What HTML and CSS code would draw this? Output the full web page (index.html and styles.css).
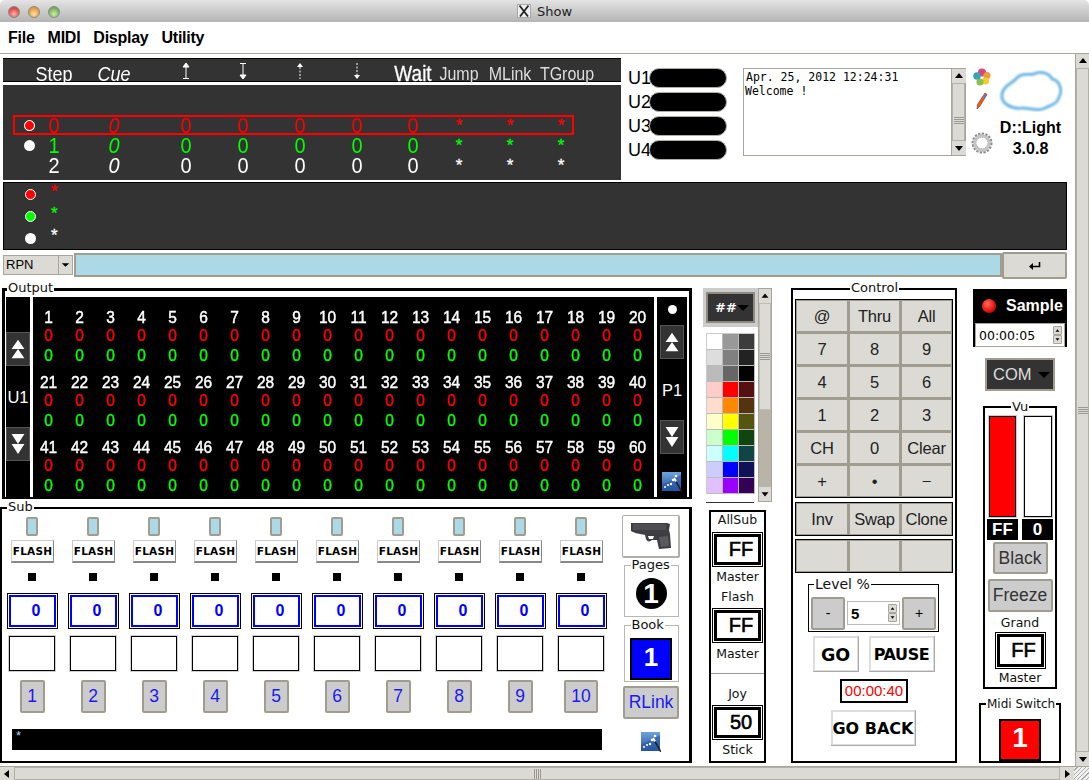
FILE: index.html
```html
<!DOCTYPE html>
<html lang="en">
<head>
<meta charset="utf-8">
<title>Show</title>
<link rel="stylesheet" href="styles.css">
</head>
<body>
<svg class="defs" width="0" height="0" aria-hidden="true">
  <defs>
    <linearGradient id="wandbg" x1="0" y1="0" x2="0" y2="1"><stop offset="0" stop-color="#6fa3dc"/><stop offset="1" stop-color="#1f4f9a"/></linearGradient>
    <filter id="soft"><feGaussianBlur stdDeviation="1"/></filter>
    <symbol id="wand" viewBox="0 0 20 20">
      <rect width="19" height="19" fill="url(#wandbg)"/>
      <path d="M0 13 L19 3 V19 H0Z" fill="#2a5aa8" opacity=".6"/>
      <path d="M12 6 L20 20" stroke="#222" stroke-width="1.6"/>
      <path d="M12 6 L14 9.5" stroke="#fff" stroke-width="2"/>
      <circle cx="3" cy="15" r="1" fill="#fff"/><circle cx="6" cy="13" r="1.1" fill="#fff"/><circle cx="9" cy="12" r="1.2" fill="#fff"/><circle cx="11" cy="8" r="1.3" fill="#fff"/><circle cx="14" cy="4" r="1.3" fill="#fff"/>
    </symbol>
    <symbol id="dbl-up" viewBox="0 0 24 34"><path d="M12 7 L19 17 H5Z M12 17 L19 27 H5Z" fill="#fff"/></symbol>
    <symbol id="dbl-down" viewBox="0 0 24 34"><path d="M5 6 H19 L12 17Z M5 17 H19 L12 28Z" fill="#fff"/></symbol>
    <symbol id="sb-up" viewBox="0 0 14 14"><path d="M3 9 H11 L7 4Z" fill="#000"/></symbol>
    <symbol id="sb-down" viewBox="0 0 14 14"><path d="M3 5 H11 L7 10Z" fill="#000"/></symbol>
    <symbol id="sb-left" viewBox="0 0 14 14"><path d="M9 3 V11 L4 7Z" fill="#000"/></symbol>
    <symbol id="sb-right" viewBox="0 0 14 14"><path d="M5 3 V11 L10 7Z" fill="#000"/></symbol>
    <symbol id="spin" viewBox="0 0 9 9"><path d="M2 6 H7 L4.5 3Z" fill="#000"/></symbol>
    <symbol id="spin-d" viewBox="0 0 9 9"><path d="M2 3 H7 L4.5 6Z" fill="#000"/></symbol>
  </defs>
</svg>

<div class="app">
  <header class="titlebar">
    <div class="lights"><i class="light red"></i><i class="light amber"></i><i class="light green"></i></div>
    <div class="title">
      <svg class="x-icon" width="14" height="14" viewBox="0 0 14 14"><rect x=".5" y=".5" width="13" height="13" fill="#eee" stroke="#aaa"/><path d="M2.5 1.5 L11 12.5 M11.5 1.5 L3 12.5" stroke="#222" stroke-width="1.8"/></svg>
      <span>Show</span>
    </div>
  </header>
  <nav class="menubar"><span>File</span><span>MIDI</span><span>Display</span><span>Utility</span></nav>

  <div class="body">
    <main class="canvas">
      <section class="top">
        <div class="cues">
          <div class="cue-head cols">
            <span></span><b>Step</b><em>Cue</em>
            <span><svg width="10" height="18" viewBox="0 0 10 18"><path d="M5 2 V16 M2 16.5 H8 M5 1 L2 5 H8Z" stroke="#fff" stroke-width="1" fill="#fff"/></svg></span>
            <span><svg width="10" height="18" viewBox="0 0 10 18"><path d="M5 2 V16 M2 1.5 H8 M5 17 L2 13 H8Z" stroke="#fff" stroke-width="1" fill="#fff"/></svg></span>
            <span><svg width="10" height="18" viewBox="0 0 10 18"><path d="M5 5 V17" stroke="#fff" stroke-dasharray="2 1.5"/><path d="M5 1 L2 5 H8Z" fill="#fff"/></svg></span>
            <span><svg width="10" height="18" viewBox="0 0 10 18"><path d="M5 1 V13" stroke="#fff" stroke-dasharray="2 1.5"/><path d="M5 17 L2 13 H8Z" fill="#fff"/></svg></span>
            <b class="wait">Wait</b><small>Jump</small><small>MLink</small><small class="tgroup">TGroup</small>
          </div>
          <div class="cue-list">
            <div class="cue-row cols active c-red"><span><i class="dot c-red-dot"></i></span><span>0</span><em>0</em><span>0</span><span>0</span><span>0</span><span>0</span><span>0</span><span class="star">*</span><span class="star">*</span><span class="star">*</span></div>
            <div class="cue-row cols c-green"><span><i class="dot"></i></span><span>1</span><em>0</em><span>0</span><span>0</span><span>0</span><span>0</span><span>0</span><span class="star">*</span><span class="star">*</span><span class="star">*</span></div>
            <div class="cue-row cols c-white"><span></span><span>2</span><em>0</em><span>0</span><span>0</span><span>0</span><span>0</span><span>0</span><span class="star">*</span><span class="star">*</span><span class="star">*</span></div>
          </div>
        </div>

        <div class="units">
          <div class="unit"><span>U1</span><i></i></div>
          <div class="unit"><span>U2</span><i></i></div>
          <div class="unit"><span>U3</span><i></i></div>
          <div class="unit"><span>U4</span><i></i></div>
        </div>

        <div class="log">
          <div class="log-text"><span class="log-first">Apr. 25, 2012 12:24:31</span><br>Welcome !</div>
          <div class="log-scroll">
            <svg class="sb-btn" width="14" height="14"><use href="#sb-up"/></svg>
            <div class="log-thumb"><i class="grip"></i></div>
            <svg class="sb-btn" width="14" height="14"><use href="#sb-down"/></svg>
          </div>
        </div>

        <div class="tools">
          <svg width="18" height="18" viewBox="0 0 18 18"><circle cx="9" cy="4.5" r="4" fill="#d8467e"/><circle cx="14" cy="7.5" r="3.6" fill="#f09a3c"/><circle cx="12.5" cy="13" r="3.6" fill="#f2d02c"/><circle cx="7" cy="14" r="3.6" fill="#8cc04c"/><circle cx="4" cy="8" r="3.8" fill="#36a4b4"/></svg>
          <svg class="pencil" width="12" height="18" viewBox="0 0 12 18"><path d="M9 1 L11 2.5 L4 14 L1 17 L1.5 12.5Z" fill="#e8601c" stroke="#7a2a10" stroke-width=".6"/><path d="M8.5 2 L10.5 3.5 L9 6 L7 4.5Z" fill="#5a7ad8"/></svg>
          <svg class="gear" width="22" height="22" viewBox="0 0 22 22"><circle cx="11" cy="11" r="8" fill="none" stroke="#8d8d8d" stroke-width="5" stroke-dasharray="2 1.1"/><circle cx="11" cy="11" r="7.2" fill="none" stroke="#c4c4c4" stroke-width="3"/><ellipse cx="11" cy="11" rx="5.5" ry="4.4" fill="#fff"/></svg>
        </div>

        <div class="brand">
          <svg width="64" height="42" viewBox="0 0 64 42"><path d="M3 25 C4 16 13 14 18 8 C23 2 30 6 35 4 C42 1 50 3 53 9 C62 11 63 22 60 27 C58 35 50 35 46 38 C38 42 30 37 22 38 C12 39 2 33 3 25Z" fill="#fff" stroke="#5fb4e0" stroke-width="3" filter="url(#soft)"/></svg>
          <b>D::Light</b>
          <b>3.0.8</b>
        </div>
      </section>

      <section class="faders">
        <div class="fade-row c-red"><i class="dot c-red-dot"></i><span>*</span></div>
        <div class="fade-row c-green"><i class="dot c-green-dot"></i><span>*</span></div>
        <div class="fade-row c-white"><i class="dot"></i><span>*</span></div>
      </section>

      <section class="cmd">
        <div class="rpn"><span>RPN</span><svg width="14" height="18" viewBox="0 0 14 18"><path d="M3 7 H11 L7 11Z" fill="#000"/></svg></div>
        <div class="cmd-input"></div>
        <div class="enter"><svg width="14" height="10" viewBox="0 0 14 10"><path d="M11.5 1 V5.5 H3" stroke="#000" stroke-width="1.6" fill="none"/><path d="M5 2 V9 L1 5.5Z" fill="#000"/></svg></div>
      </section>

      <section class="bottom">
        <div class="leftcol">
          <div class="output">
            <span class="legend legend-out">Output</span>
            <div class="out-side">
              <svg class="dbl first" width="24" height="34"><use href="#dbl-up"/></svg>
              <div class="out-label">U1</div>
              <svg class="dbl" width="24" height="34"><use href="#dbl-down"/></svg>
            </div>
            <div class="out-grid">
              <div class="out-row num"><span>1</span><span>2</span><span>3</span><span>4</span><span>5</span><span>6</span><span>7</span><span>8</span><span>9</span><span>10</span><span>11</span><span>12</span><span>13</span><span>14</span><span>15</span><span>16</span><span>17</span><span>18</span><span>19</span><span>20</span></div>
              <div class="out-row r"><span>0</span><span>0</span><span>0</span><span>0</span><span>0</span><span>0</span><span>0</span><span>0</span><span>0</span><span>0</span><span>0</span><span>0</span><span>0</span><span>0</span><span>0</span><span>0</span><span>0</span><span>0</span><span>0</span><span>0</span></div>
              <div class="out-row g"><span>0</span><span>0</span><span>0</span><span>0</span><span>0</span><span>0</span><span>0</span><span>0</span><span>0</span><span>0</span><span>0</span><span>0</span><span>0</span><span>0</span><span>0</span><span>0</span><span>0</span><span>0</span><span>0</span><span>0</span></div>
              <div class="out-row num"><span>21</span><span>22</span><span>23</span><span>24</span><span>25</span><span>26</span><span>27</span><span>28</span><span>29</span><span>30</span><span>31</span><span>32</span><span>33</span><span>34</span><span>35</span><span>36</span><span>37</span><span>38</span><span>39</span><span>40</span></div>
              <div class="out-row r"><span>0</span><span>0</span><span>0</span><span>0</span><span>0</span><span>0</span><span>0</span><span>0</span><span>0</span><span>0</span><span>0</span><span>0</span><span>0</span><span>0</span><span>0</span><span>0</span><span>0</span><span>0</span><span>0</span><span>0</span></div>
              <div class="out-row g"><span>0</span><span>0</span><span>0</span><span>0</span><span>0</span><span>0</span><span>0</span><span>0</span><span>0</span><span>0</span><span>0</span><span>0</span><span>0</span><span>0</span><span>0</span><span>0</span><span>0</span><span>0</span><span>0</span><span>0</span></div>
              <div class="out-row num"><span>41</span><span>42</span><span>43</span><span>44</span><span>45</span><span>46</span><span>47</span><span>48</span><span>49</span><span>50</span><span>51</span><span>52</span><span>53</span><span>54</span><span>55</span><span>56</span><span>57</span><span>58</span><span>59</span><span>60</span></div>
              <div class="out-row r"><span>0</span><span>0</span><span>0</span><span>0</span><span>0</span><span>0</span><span>0</span><span>0</span><span>0</span><span>0</span><span>0</span><span>0</span><span>0</span><span>0</span><span>0</span><span>0</span><span>0</span><span>0</span><span>0</span><span>0</span></div>
              <div class="out-row g"><span>0</span><span>0</span><span>0</span><span>0</span><span>0</span><span>0</span><span>0</span><span>0</span><span>0</span><span>0</span><span>0</span><span>0</span><span>0</span><span>0</span><span>0</span><span>0</span><span>0</span><span>0</span><span>0</span><span>0</span></div>
            </div>
            <div class="out-side out-right">
              <i class="page-dot"></i>
              <svg class="dbl second" width="24" height="34"><use href="#dbl-up"/></svg>
              <div class="out-label p1">P1</div>
              <svg class="dbl" width="24" height="34"><use href="#dbl-down"/></svg>
              <svg class="wand-out" width="20" height="20"><use href="#wand"/></svg>
            </div>
          </div>

          <div class="sub">
            <span class="legend legend-sub">Sub</span>
            <div class="sub-main">
              <div class="sub-cols">
                <div class="sub-col"><i class="chk"></i><div class="flash">FLASH</div><i class="sq"></i><div class="blue-box">0</div><div class="empty"></div><div class="numbtn">1</div></div>
                <div class="sub-col"><i class="chk"></i><div class="flash">FLASH</div><i class="sq"></i><div class="blue-box">0</div><div class="empty"></div><div class="numbtn">2</div></div>
                <div class="sub-col"><i class="chk"></i><div class="flash">FLASH</div><i class="sq"></i><div class="blue-box">0</div><div class="empty"></div><div class="numbtn">3</div></div>
                <div class="sub-col"><i class="chk"></i><div class="flash">FLASH</div><i class="sq"></i><div class="blue-box">0</div><div class="empty"></div><div class="numbtn">4</div></div>
                <div class="sub-col"><i class="chk"></i><div class="flash">FLASH</div><i class="sq"></i><div class="blue-box">0</div><div class="empty"></div><div class="numbtn">5</div></div>
                <div class="sub-col"><i class="chk"></i><div class="flash">FLASH</div><i class="sq"></i><div class="blue-box">0</div><div class="empty"></div><div class="numbtn">6</div></div>
                <div class="sub-col"><i class="chk"></i><div class="flash">FLASH</div><i class="sq"></i><div class="blue-box">0</div><div class="empty"></div><div class="numbtn">7</div></div>
                <div class="sub-col"><i class="chk"></i><div class="flash">FLASH</div><i class="sq"></i><div class="blue-box">0</div><div class="empty"></div><div class="numbtn">8</div></div>
                <div class="sub-col"><i class="chk"></i><div class="flash">FLASH</div><i class="sq"></i><div class="blue-box">0</div><div class="empty"></div><div class="numbtn">9</div></div>
                <div class="sub-col"><i class="chk"></i><div class="flash">FLASH</div><i class="sq"></i><div class="blue-box">0</div><div class="empty"></div><div class="numbtn wide">10</div></div>
              </div>
              <div class="sub-bar">*</div>
            </div>
            <div class="sub-side">
              <div class="gun">
                <svg width="42" height="28" viewBox="0 0 42 28"><path d="M1 1 H37 L40 2 L39 8 L40 12 L41 26 L29 27 L27 18 H22 C20 20 17 20 16 17 L15 13 C10 12 4 11 1 9Z" fill="#3e3e42"/><path d="M3 3 H36 M3 5 H36 M3 7 H36" stroke="#6f6f73" stroke-width=".7"/><path d="M29 15 L38 14 L39 24 L31 25Z" fill="#59595e"/><path d="M18 14 H24 L23 17 H19Z" fill="#fff"/></svg>
              </div>
              <div class="pages">
                <span class="legend legend-pages">Pages</span>
                <div class="page-circle">1</div>
              </div>
              <div class="book">
                <span class="legend legend-pages">Book</span>
                <div class="book-square">1</div>
              </div>
              <div class="numbtn rlink">RLink</div>
              <svg class="wand-sub" width="20" height="20"><use href="#wand"/></svg>
            </div>
          </div>
        </div>

        <div class="colorcol">
          <div class="palette">
            <div class="pal-left">
              <div class="pal-select-wrap"><div class="pal-select"><b>##</b><i class="tri"></i></div></div>
              <div class="swatches">
                <i class="s1"></i><i class="s2"></i><i class="s3"></i>
                <i class="s4"></i><i class="s5"></i><i class="s6"></i>
                <i class="s7"></i><i class="s8"></i><i class="s9"></i>
                <i class="s10"></i><i class="s11"></i><i class="s12"></i>
                <i class="s13"></i><i class="s14"></i><i class="s15"></i>
                <i class="s16"></i><i class="s17"></i><i class="s18"></i>
                <i class="s19"></i><i class="s20"></i><i class="s21"></i>
                <i class="s22"></i><i class="s23"></i><i class="s24"></i>
                <i class="s25"></i><i class="s26"></i><i class="s27"></i>
                <i class="s28"></i><i class="s29"></i><i class="s30"></i>
              </div>
              <div class="pal-rule"></div>
            </div>
            <div class="pal-scroll">
              <svg class="sb-btn" width="14" height="14"><use href="#sb-up"/></svg>
              <div class="pal-thumb"><i class="grip"></i></div>
              <div class="pal-trough"></div>
              <svg class="sb-btn" width="14" height="14"><use href="#sb-down"/></svg>
            </div>
          </div>
          <div class="allsub">
            <div class="lbl">AllSub</div>
            <div class="val-box m4">FF</div>
            <div class="lbl m2">Master</div>
            <div class="lbl m4">Flash</div>
            <div class="val-box m3">FF</div>
            <div class="lbl m3">Master</div>
            <div class="as-rule"></div>
            <div class="lbl joy">Joy</div>
            <div class="val-box m3">50</div>
            <div class="lbl m2">Stick</div>
          </div>
        </div>

        <div class="control">
          <span class="legend legend-ctrl">Control</span>
          <div class="keys six">
            <div>@</div><div>Thru</div><div>All</div>
            <div>7</div><div>8</div><div>9</div>
            <div>4</div><div>5</div><div>6</div>
            <div>1</div><div>2</div><div>3</div>
            <div>CH</div><div>0</div><div>Clear</div>
            <div>+</div><div>•</div><div>−</div>
          </div>
          <div class="keys g2"><div>Inv</div><div>Swap</div><div>Clone</div></div>
          <div class="keys g3"><div></div><div></div><div></div></div>
          <div class="level">
            <span class="legend legend-level">Level %</span>
            <div class="lvl-btn">-</div>
            <div class="lvl-spin"><b>5</b><span class="spinner"><svg width="9" height="9"><use href="#spin"/></svg><svg width="9" height="9"><use href="#spin-d"/></svg></span></div>
            <div class="lvl-btn">+</div>
          </div>
          <div class="go-row"><div class="go go-a">GO</div><div class="go go-b">PAUSE</div></div>
          <div class="timer">00:00:40</div>
          <div class="go go-c">GO BACK</div>
        </div>

        <div class="rightcol">
          <div class="sample">
            <div class="sample-top"><i class="led"></i><b>Sample</b></div>
            <div class="sample-input"><span>00:00:05</span><span class="spinner"><svg width="9" height="9"><use href="#spin"/></svg><svg width="9" height="9"><use href="#spin-d"/></svg></span></div>
          </div>
          <div class="com"><span>COM</span><i class="tri"></i></div>
          <div class="vu">
            <span class="legend legend-vu">Vu</span>
            <div class="vu-bars"><div class="bar red"></div><div class="bar white"></div></div>
            <div class="vu-vals"><b>FF</b><b>0</b></div>
            <div class="numbtn gray black-btn">Black</div>
            <div class="numbtn gray freeze">Freeze</div>
            <div class="lbl m2 tall">Grand</div>
            <div class="val-box grand">FF</div>
            <div class="lbl tall">Master</div>
          </div>
          <div class="midi">
            <span class="legend legend-midi">Midi Switch</span>
            <div class="midi-square">1</div>
          </div>
        </div>
      </section>
    </main>

    <aside class="vscroll">
      <svg class="sb-btn" width="14" height="14"><use href="#sb-up"/></svg>
      <div class="v-thumb"><i class="grip"></i></div>
      <svg class="sb-btn" width="14" height="14"><use href="#sb-down"/></svg>
    </aside>
  </div>

  <footer class="hscroll">
    <svg class="sb-btn" width="14" height="14"><use href="#sb-left"/></svg>
    <div class="h-thumb"><i class="grip-h"></i></div>
    <svg class="sb-btn" width="14" height="14"><use href="#sb-right"/></svg>
    <div class="resize"></div>
  </footer>
</div>
</body>
</html>
```
FILE: styles.css
```css
* { box-sizing: border-box; }
html, body { margin: 0; padding: 0; }
body { width: 1089px; height: 780px; overflow: hidden; background: #fff; font-family: "Liberation Sans", Arial, sans-serif; color: #000; }
i, em { display: block; }
.defs { position: absolute; }
.app { width: 1089px; height: 780px; display: flex; flex-direction: column; }

/* window chrome */
.titlebar { height: 22px; flex: none; position: relative; display: flex; align-items: center; justify-content: center; background: linear-gradient(#e4e4e4, #b4b4b4); border-radius: 5px 5px 0 0; }
.lights { position: absolute; left: 8px; top: 6px; display: flex; gap: 8px; }
.light { width: 12px; height: 12px; border-radius: 50%; border: 1px solid #888; }
.light.red { background: radial-gradient(circle at 50% 70%, #ffb0a8, #d8453c 70%); }
.light.amber { background: radial-gradient(circle at 50% 70%, #ffe0a0, #dd9a3a 70%); }
.light.green { background: radial-gradient(circle at 50% 70%, #c8f0a8, #72ac50 70%); }
.title { display: flex; align-items: center; gap: 6px; font: 13px "DejaVu Sans", sans-serif; color: #222; }
.menubar { height: 32px; flex: none; display: flex; align-items: center; gap: 13px; padding-left: 8px; border-bottom: 1px solid #a8a8a0; font-size: 16px; font-weight: bold; background: #fff; }
.menubar span { letter-spacing: -.25px; }
.body { height: 712px; flex: none; display: flex; }
.canvas { width: 1075px; flex: none; background: #fff; }

/* scrollbars */
.sb-btn { display: block; flex: none; background: #dcdad5; }
.grip { display: block; width: 10px; height: 7px; background: repeating-linear-gradient(#9a9890 0 1px, #dcdad5 1px 2px); }
.grip-h { display: block; width: 7px; height: 10px; background: repeating-linear-gradient(90deg, #9a9890 0 1px, #dcdad5 1px 2px); }
.vscroll { width: 14px; flex: none; display: flex; flex-direction: column; background: #dcdad5; border-left: 1px solid #a8a69c; }
.v-thumb { flex: 1; display: flex; align-items: center; justify-content: center; border: 1px solid #b4b2a8; background: #dcdad5; }
.hscroll { height: 14px; flex: none; display: flex; background: #dcdad5; border-top: 1px solid #a8a69c; }
.h-thumb { width: 1046px; display: flex; align-items: center; justify-content: center; border: 1px solid #b4b2a8; }
.resize { width: 15px; background: repeating-linear-gradient(135deg, #f0f0f0 0 2px, #aaa 2px 3px); }

/* top section */
.top { height: 128px; display: flex; }
.cues { width: 618px; margin-left: 3px; flex: none; }
.cols { display: grid; grid-template-columns: 15px 34px 86px 58px 56px 58px 56px 56px 36px 66px 36px; }
.cols > * { display: flex; justify-content: center; align-items: center; white-space: nowrap; }
.cue-head { margin-top: 4px; height: 24px; padding-left: 19px; background: #333; border-top: 1px solid #000; border-bottom: 1px solid #000; color: #fff; font-size: 18px; }
.cue-head b, .cue-head em { font-weight: normal; padding-top: 4px; transform: scaleY(1.12); }
.cue-head b.wait { font-size: 19px; -webkit-text-stroke: .25px #fff; }
.cue-head small { font-size: 16px; color: #ddd; padding-top: 3px; transform: scaleY(1.12); }
.cue-head svg { margin-top: -2px; }
.tgroup { margin-left: 12px; }
.cue-list { margin-top: 3px; height: 95px; padding-top: 30px; background: #333; }
.cue-row { margin-left: 10px; width: 561px; height: 20px; padding-left: 7px; border: 2px solid transparent; font-size: 20px; line-height: 16px; }
.cue-row > span:not(.star), .cue-row > em { transform: scaleY(1.14); }
.cue-row.active { border-color: #f00; }
.star { font-size: 17px; align-items: flex-start; height: 14px; margin-top: 1px; -webkit-text-stroke: .3px currentColor; }
.c-red { color: #f00; }
.c-green { color: #0f0; }
.c-white { color: #fff; }
.dot { width: 11px; height: 11px; border-radius: 50%; background: #fff; flex: none; }
.cue-row .dot { transform: scaleY(.88); }
.dot.c-red-dot { background: #f00; border: 1px solid #fff; }
.dot.c-green-dot { background: #0f0; border: 1px solid #fff; }

.units { margin: 14px 0 0 7px; width: 99px; flex: none; display: flex; flex-direction: column; gap: 4px; }
.unit { display: flex; height: 20px; align-items: center; font-size: 18px; }
.unit span { width: 21px; flex: none; }
.unit i { width: 78px; height: 20px; border-radius: 10px; background: #000; border: 1px solid #b0b0a8; }
.log { margin: 14px 0 0 16px; width: 223px; height: 88px; flex: none; display: flex; border: 1px solid #a8a69c; }
.log-text { flex: 1; font: 11.5px/14px "DejaVu Sans Mono", monospace; padding: 1px 0 0 1px; white-space: nowrap; }
.log-first { padding-left: 1px; }
.log-scroll { width: 14px; flex: none; display: flex; flex-direction: column; background: #dcdad5; border-left: 1px solid #a8a69c; }
.log-thumb { flex: 1; display: flex; align-items: center; justify-content: center; padding-top: 16px; border: 1px solid #b4b2a8; }
.tools { margin: 14px 0 0 4px; width: 24px; flex: none; display: flex; flex-direction: column; align-items: center; }
.pencil { margin-top: 6px; }
.gear { margin-top: 22px; }
.brand { margin: 16px 0 0 1px; width: 71px; flex: none; display: flex; flex-direction: column; align-items: center; font-size: 16px; line-height: 21px; }
.brand svg { flex: none; margin-bottom: 5px; }

.faders { margin-left: 3px; width: 1064px; height: 68px; background: #333; border: 1px solid #000; }
.fade-row { height: 22px; display: flex; align-items: center; padding-left: 21px; font-size: 17px; -webkit-text-stroke: .3px currentColor; }
.fade-row span { margin-left: 15px; height: 16px; line-height: 16px; margin-top: -4px; }

.cmd { margin: 2px 0 0 3px; width: 1064px; height: 27px; display: flex; }
.rpn { margin-top: 3px; width: 70px; height: 20px; flex: none; display: flex; justify-content: space-between; background: #dcdad5; border: 1px solid #a8a69c; font-size: 13px; line-height: 18px; padding-left: 2px; }
.rpn svg { background: #dcdad5; border-left: 1px solid #a8a69c; }
.cmd-input { margin: 1px 0 0 1px; width: 928px; height: 24px; background: #add8e6; border: 2px solid #a09c90; }
.enter { flex: 1; display: flex; align-items: center; justify-content: center; background: #dcdad5; border: 2px solid #a09c90; border-radius: 2px; }

/* bottom section */
.bottom { margin-top: 9px; height: 475px; display: flex; }
.legend { position: absolute; background: #fff; font: 13px/14px "DejaVu Sans", sans-serif; padding: 0 1px; white-space: nowrap; color: #111; }
.leftcol { width: 692px; flex: none; }

.output { position: relative; margin-left: 2px; width: 690px; height: 211px; border: 3px solid #000; border-bottom-width: 2px; display: flex; gap: 3px; padding: 6px 2px 0 1px; }
.legend-out { left: 2px; top: -10px; }
.out-side { width: 24px; flex: none; background: #000; display: flex; flex-direction: column; align-items: center; color: #fff; }
.out-right { width: 30px; }
.dbl { display: block; flex: none; background: #333; border: 1px solid #555; }
.first { margin-top: 35px; }
.second { margin-top: 11px; }
.out-label { height: 61px; line-height: 62px; font-size: 16.5px; flex: none; }
.page-dot { width: 9px; height: 9px; border-radius: 50%; background: #fff; margin-top: 8px; }
.wand-out { margin-top: 18px; flex: none; }
.out-grid { width: 621px; flex: none; background: #000; padding-top: 11px; }
.out-row { display: grid; grid-template-columns: repeat(20, 31px); height: 18px; line-height: 18px; text-align: center; font-size: 15.5px; -webkit-text-stroke: .4px currentColor; }
.out-row span { transform: scaleY(1.12); }
.out-row + .num { margin-top: 9px; }
.out-row.num { color: #fff; }
.out-row.r { color: #f00; }
.out-row.g { color: #0f0; margin-top: 2px; }

.sub { position: relative; margin-top: 8px; height: 256px; border: 2px solid #000; border-width: 2px 3px 2px 2px; display: flex; }
.legend-sub { left: 5px; top: -9px; }
.sub-main { width: 610px; flex: none; }
.sub-cols { display: flex; }
.sub-col { width: 61px; flex: none; display: flex; flex-direction: column; align-items: center; }
.chk { margin-top: 8px; width: 12px; height: 19px; background: #add8e6; border: 2px solid #a09c90; border-radius: 2px; margin-right: 1px; }
.flash { margin-top: 4px; width: 43px; height: 23px; background: #fff; border: 1px solid #ccc; border-right-color: #888; border-bottom: 2px solid #888; font: bold 10.5px/20px "DejaVu Sans", sans-serif; text-align: center; letter-spacing: .2px; }
.sq { margin-top: 10px; width: 8px; height: 8px; background: #000; margin-right: 1px; }
.blue-box { margin-top: 12px; width: 51px; height: 36px; border: 1px solid #000; box-shadow: inset 0 0 0 1px #fff, inset 0 0 0 3px #00f; color: #00f; font-weight: bold; font-size: 16px; line-height: 34px; text-align: center; padding-left: 7px; }
.empty { margin: 7px 1px 0 0; width: 46px; height: 35px; background: #fff; border: 1px solid #000; outline: 1px solid #d0d0d0; }
.numbtn { margin-top: 9px; width: 25px; height: 33px; background: #ccc; border: 2px solid #a09c90; border-radius: 2px; color: #1a1aee; font-size: 17.5px; line-height: 29px; text-align: center; }
.sub-col .numbtn { margin-right: 1px; }
.numbtn.wide { width: 34px; }
.sub-bar { margin: 16px 0 0 10px; width: 590px; height: 21px; background: #000; color: #add8e6; font-size: 13px; line-height: 14px; padding-left: 4px; }

.sub-side { margin-left: 10px; width: 58px; flex: none; display: flex; flex-direction: column; align-items: center; }
.gun { margin-top: 6px; width: 58px; height: 43px; border: 1px solid #b0aea6; border-bottom-width: 2px; border-right-width: 2px; border-radius: 2px; display: flex; align-items: center; justify-content: center; }
.pages, .book { position: relative; margin-top: 7px; width: 55px; height: 52px; border: 1px solid #b8b8b0; display: flex; justify-content: center; }
.book { margin-top: 8px; height: 57px; }
.legend-pages { left: 6px; top: -8px; }
.page-circle { margin-top: 12px; width: 31px; height: 31px; border-radius: 50%; background: #000; color: #fff; font-weight: bold; font-size: 28px; line-height: 31px; text-align: center; }
.book-square { margin-top: 12px; width: 42px; height: 42px; background: #00f; border: 2px solid #000; color: #fff; font-weight: bold; font-size: 26px; line-height: 34px; text-align: center; }
.numbtn.rlink { margin-top: 4px; width: 56px; font-size: 17.5px; }
.wand-sub { margin-top: 13px; flex: none; }

/* palette */
.colorcol { margin-left: 11px; width: 69px; flex: none; }
.palette { height: 214px; display: flex; }
.pal-left { width: 55px; flex: none; }
.pal-select-wrap { height: 39px; background: #ccc; padding: 4px 3px; }
.pal-select { height: 31px; background: #333; border: 2px solid #8e8a80; display: flex; align-items: center; justify-content: space-between; padding: 0 4px 0 7px; color: #fff; font: bold 13px "DejaVu Sans", sans-serif; }
.tri { width: 0; height: 0; border-left: 6px solid transparent; border-right: 6px solid transparent; border-top: 6px solid #000; }
.swatches { margin: 6px 0 0 3px; width: 49px; height: 161px; display: grid; grid-template-columns: repeat(3, 1fr); grid-auto-rows: 16px; border-top: 1px solid #ccc; border-left: 1px solid #ccc; }
.swatches i { border: 1px solid #bbb; border-width: 0 1px 1px 0; }
.s1 { background: #fff; } .s2 { background: #999; } .s3 { background: #3c3c3c; }
.s4 { background: #ddd; } .s5 { background: #808080; } .s6 { background: #222; }
.s7 { background: #bbb; } .s8 { background: #666; } .s9 { background: #000; }
.s10 { background: #fcc; } .s11 { background: #f00; } .s12 { background: #511; }
.s13 { background: #fdc; } .s14 { background: #f80; } .s15 { background: #531; }
.s16 { background: #ffc; } .s17 { background: #ff0; } .s18 { background: #551; }
.s19 { background: #cfc; } .s20 { background: #0f0; } .s21 { background: #141; }
.s22 { background: #cff; } .s23 { background: #0ff; } .s24 { background: #144; }
.s25 { background: #ccf; } .s26 { background: #00f; } .s27 { background: #115; }
.s28 { background: #e0c0ff; } .s29 { background: #90f; } .s30 { background: #305; }
.pal-rule { margin: 8px 0 0 3px; width: 48px; height: 1px; background: #333; }
.pal-scroll { width: 14px; flex: none; display: flex; flex-direction: column; background: #dcdad5; border: 1px solid #a8a69c; }
.pal-scroll .sb-btn { width: 12px; height: 14px; }
.pal-thumb { height: 107px; flex: none; display: flex; align-items: center; justify-content: center; border: 1px solid #c0beb4; }
.pal-trough { flex: 1; background: #b8b4a8; }
.allsub { margin: 8px 0 0 6px; width: 57px; height: 253px; border: 2px solid #000; display: flex; flex-direction: column; align-items: center; }
.lbl { height: 16px; font: 12.5px/16px "DejaVu Sans", sans-serif; color: #111; text-align: center; flex: none; }
.lbl.tall { height: 18px; line-height: 18px; }
.m2 { margin-top: 2px; } .m3 { margin-top: 3px; } .m4 { margin-top: 4px; }
.val-box { width: 51px; height: 35px; flex: none; border: 1px solid #000; box-shadow: inset 0 0 0 1px #fff, inset 0 0 0 4px #000; font-size: 20px; -webkit-text-stroke: .6px #000; line-height: 33px; text-align: center; padding-left: 7px; }
.as-rule { margin-top: 11px; width: 100%; height: 1px; background: #999; flex: none; }
.joy { margin-top: 12px; }

/* control */
.control { position: relative; margin-left: 19px; width: 166px; height: 475px; flex: none; border: 2px solid #000; padding: 9px 2px 0; }
.legend-ctrl { left: 57px; top: -9px; }
.keys { display: grid; grid-template-columns: 50px 49px 49px; gap: 3px; padding: 1px; background: #a09c90; border: 1px solid #000; width: 158px; }
.keys > div { height: 30px; background: #dcdad5; display: flex; align-items: center; justify-content: center; font-size: 16.5px; color: #222; padding-top: 1px; letter-spacing: -.2px; }
.g2 { margin-top: 4px; }
.g3 { margin-top: 3px; }
.level { position: relative; margin: 11px 0 0 13px; width: 131px; height: 48px; border: 1px solid #000; display: flex; gap: 2px; padding: 12px 2px 0; }
.legend-level { left: 5px; top: -8px; font-size: 14px; }
.lvl-btn { width: 34px; height: 33px; background: #ccc; border: 2px solid #a09c90; border-radius: 2px; text-align: center; font-size: 14px; line-height: 29px; }
.lvl-spin { margin-top: 4px; width: 53px; height: 24px; border: 1px solid #bbb; display: flex; justify-content: space-between; align-items: center; padding: 0 2px 0 3px; font-size: 15px; }
.spinner { display: flex; flex-direction: column; }
.spinner svg { display: block; background: #dcdad5; border: 1px solid #a8a69c; border-radius: 1px; }
.go-row { display: flex; gap: 10px; margin: 4px 0 0 18px; }
.go { height: 36px; background: #fff; border: 1px solid #ddd; border-right: 2px solid #aaa; border-bottom: 2px solid #aaa; outline: 1px solid #ddd; outline-offset: -2px; font: bold 16px/36px "DejaVu Sans", sans-serif; text-align: center; white-space: nowrap; }
.go-a { width: 46px; font-size: 17.5px; }
.go-b { width: 66px; letter-spacing: -.4px; }
.go-c { margin: 7px 0 0 36px; width: 85px; }
.timer { margin: 7px 0 0 45px; width: 68px; height: 24px; border: 2px solid #000; color: #f00; font-size: 15px; line-height: 20px; text-align: center; }

/* right */
.rightcol { margin-left: 16px; width: 94px; flex: none; }
.sample { margin-top: 1px; height: 58px; background: #000; padding: 0 2px; }
.sample-top { height: 34px; display: flex; align-items: center; color: #fff; font-size: 16px; padding-left: 7px; }
.led { width: 14px; height: 14px; border-radius: 50%; background: radial-gradient(circle at 40% 35%, #ff6a5a, #e01010 60%, #8c0a0a); margin-right: 10px; flex: none; }
.sample-input { height: 24px; background: #fff; border: 1px solid #a8a69c; display: flex; justify-content: space-between; align-items: center; padding: 0 2px 0 3px; font: 12.5px "DejaVu Sans", sans-serif; }
.com { margin: 11px 0 0 12px; width: 70px; height: 33px; background: #333; border: 2px solid #a09c90; display: flex; align-items: center; justify-content: space-between; padding: 0 3px 0 6px; color: #ddd; font-size: 16.5px; }
.vu { position: relative; margin: 15px 0 0 10px; width: 74px; height: 283px; border: 2px solid #000; display: flex; flex-direction: column; align-items: center; padding-top: 7px; }
.legend-vu { left: 26px; top: -8px; }
.vu-bars { display: flex; gap: 6px; }
.bar { width: 29px; height: 103px; border: 2px solid #000; outline: 1px solid #ccc; outline-offset: -1px; }
.bar.red { background: #f00; }
.bar.white { background: #fff; width: 30px; }
.vu-vals { display: flex; gap: 4px; margin-top: 1px; }
.vu-vals b { width: 31px; height: 21px; background: #000; color: #fff; font-size: 17px; line-height: 21px; text-align: center; }
.numbtn.gray { color: #333; }
.black-btn { margin-top: 2px; width: 55px; height: 32px; }
.numbtn.freeze { margin-top: 5px; width: 65px; }
.val-box.grand { height: 37px; line-height: 35px; }
.midi { position: relative; margin: 14px 0 0 6px; width: 82px; height: 60px; border: 2px solid #000; display: flex; justify-content: center; padding-top: 14px; }
.legend-midi { left: 5px; top: -8px; font-size: 12px; }
.midi-square { width: 42px; height: 42px; background: #f00; border: 2px solid #000; color: #fff; font-weight: bold; font-size: 28px; line-height: 34px; text-align: center; }
```
